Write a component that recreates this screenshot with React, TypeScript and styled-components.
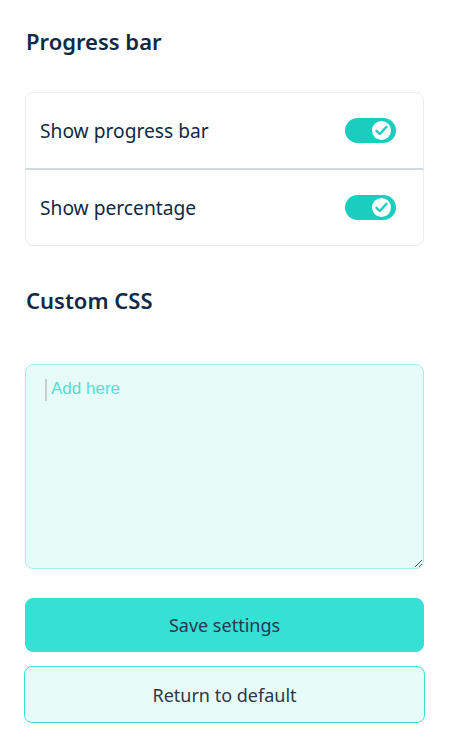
import React, { useState } from 'react';
import styled, { createGlobalStyle } from 'styled-components';

const GlobalStyle = createGlobalStyle`
  body {
    margin: 0;
    background: #ffffff;
    font-family: "Noto Sans", "Open Sans", sans-serif;
  }
`;

const Page = styled.div`
  width: 399px;
  padding: 27px 33px 28px 25px;
  display: flex;
  flex-direction: column;
`;

const Heading = styled.h2<{ $gap: number }>`
  margin: 0 0 ${({ $gap }) => $gap}px 1px;
  font-size: 22px;
  line-height: 28px;
  font-weight: 600;
  color: #0f2a47;
`;

const Card = styled.div`
  border: 1px solid #ececec;
  border-radius: 8px;
  margin-bottom: 40px;
  overflow: hidden;
`;

const Row = styled.div`
  display: flex;
  align-items: center;
  justify-content: space-between;
  height: 75px;
  padding: 0 27px 0 14px;

  & + & {
    border-top: 2px solid #cddae2;
  }
`;

const Label = styled.span`
  font-size: 19.2px;
  color: #102a45;
`;

const Track = styled.button<{ $on: boolean }>`
  position: relative;
  width: 51px;
  height: 25px;
  padding: 0;
  border: none;
  border-radius: 13px;
  background: ${({ $on }) => ($on ? '#19cdbf' : '#c9d3da')};
  cursor: pointer;
`;

const Knob = styled.span<{ $on: boolean }>`
  position: absolute;
  top: 3px;
  left: ${({ $on }) => ($on ? '27px' : '3px')};
  width: 19px;
  height: 19px;
  border-radius: 50%;
  background: #ffffff;
  display: flex;
  align-items: center;
  justify-content: center;
`;

const EditorWrap = styled.div`
  position: relative;
  margin-bottom: 29px;

  &::before {
    content: '';
    position: absolute;
    left: 20px;
    top: 15px;
    width: 2px;
    height: 22px;
    background: #c9cccc;
  }
`;

const Editor = styled.textarea`
  display: block;
  box-sizing: border-box;
  width: 399px;
  height: 205px;
  margin: 0;
  padding: 13px 25px;
  border: 1px solid #a8ede7;
  border-radius: 8px;
  background: #e7fbf8;
  font-family: "Liberation Sans", Arial, sans-serif;
  font-size: 17px;
  line-height: 22px;
  color: #0f2a47;
  outline: none;

  &::placeholder {
    color: #55ded4;
    opacity: 1;
  }
`;

const Button = styled.button<{ $primary?: boolean }>`
  box-sizing: border-box;
  height: ${({ $primary }) => ($primary ? '54px' : '57px')};
  width: ${({ $primary }) => ($primary ? '399px' : '401px')};
  margin: ${({ $primary }) => ($primary ? '0 0 14px 0' : '0 0 0 -1px')};
  border-radius: 8px;
  border: 1px solid ${({ $primary }) => ($primary ? '#36e0d4' : '#3ae2d6')};
  background: ${({ $primary }) => ($primary ? '#36e0d4' : '#e7fcf9')};
  font-family: "Noto Sans", "Open Sans", sans-serif;
  font-size: 18px;
  color: #27394b;
  cursor: pointer;
`;

const Check = () => (
  <svg width="13" height="11" viewBox="0 0 13 11" fill="none">
    <path d="M1.5 5.8 L4.8 9 L11.5 1.8" stroke="#19cdbf" strokeWidth="2.4" strokeLinecap="round" strokeLinejoin="round" />
  </svg>
);

const Toggle: React.FC<{ on: boolean; onChange: () => void }> = ({ on, onChange }) => (
  <Track $on={on} onClick={onChange} aria-pressed={on}>
    <Knob $on={on}>{on && <Check />}</Knob>
  </Track>
);

export default function App() {
  const [bar, setBar] = useState(true);
  const [pct, setPct] = useState(true);

  return (
    <>
      <GlobalStyle />
      <Page>
        <Heading $gap={37}>Progress bar</Heading>
        <Card>
          <Row>
            <Label>Show progress bar</Label>
            <Toggle on={bar} onChange={() => setBar(!bar)} />
          </Row>
          <Row>
            <Label>Show percentage</Label>
            <Toggle on={pct} onChange={() => setPct(!pct)} />
          </Row>
        </Card>
        <Heading $gap={50}>Custom CSS</Heading>
        <EditorWrap>
          <Editor placeholder="Add here" />
        </EditorWrap>
        <Button $primary>Save settings</Button>
        <Button>Return to default</Button>
      </Page>
    </>
  );
}
